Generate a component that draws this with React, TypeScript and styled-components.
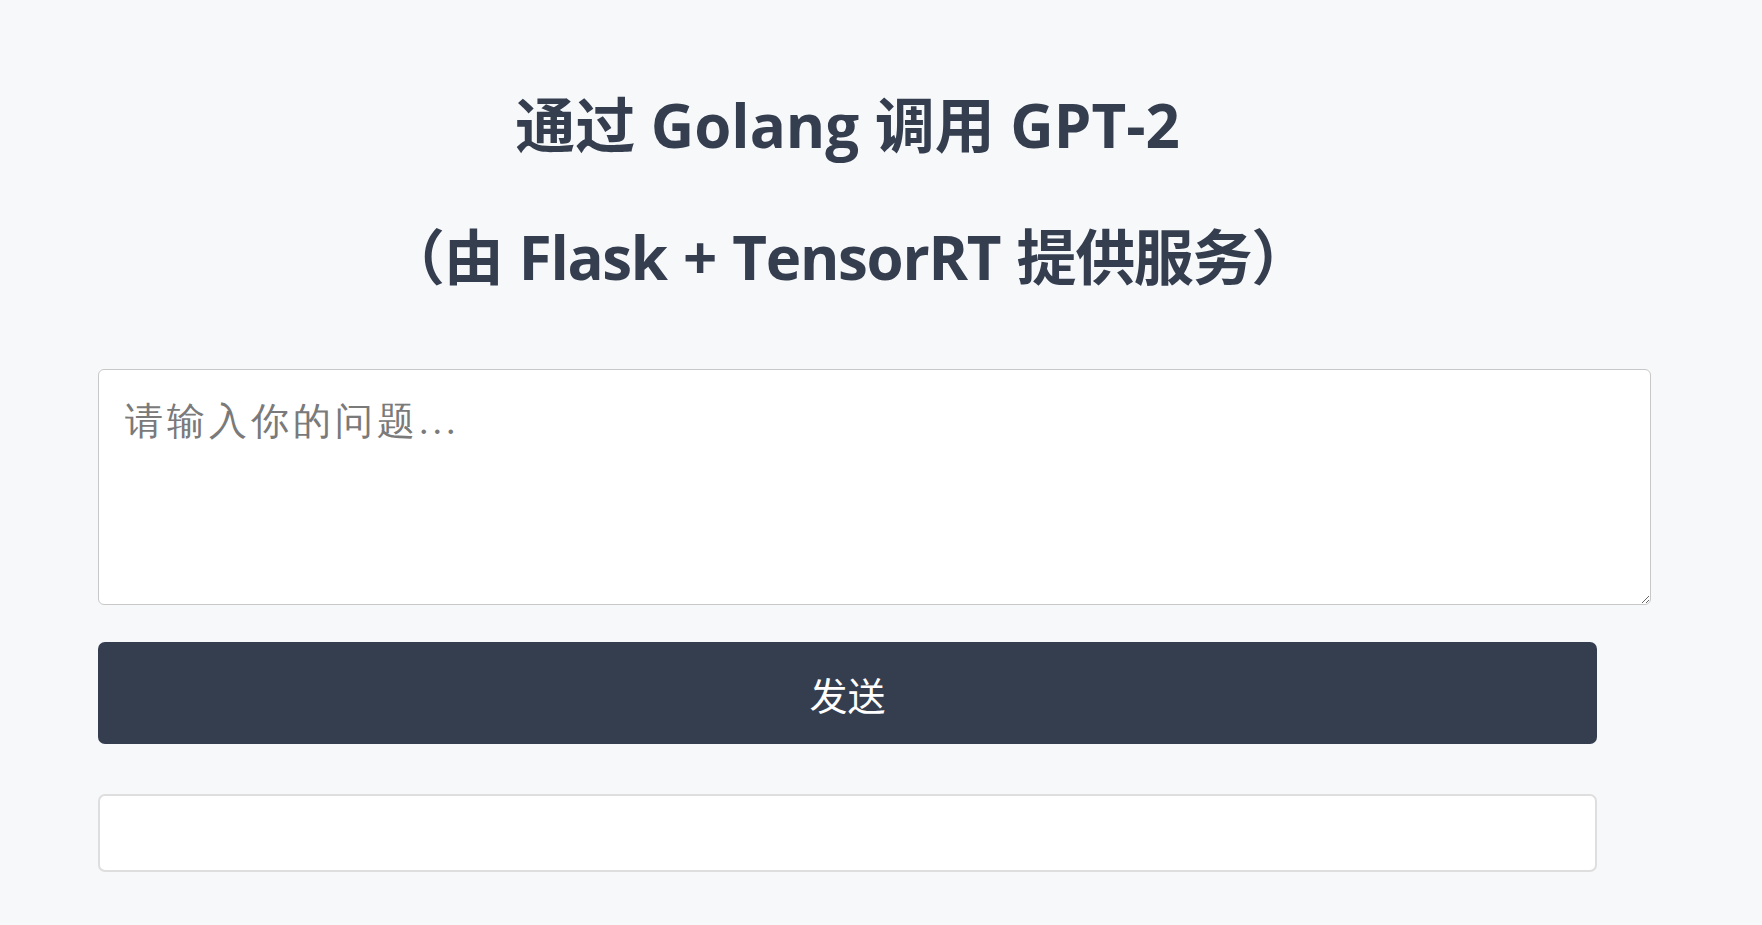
import React from "react";
import styled, { createGlobalStyle } from "styled-components";

const GlobalStyle = createGlobalStyle`
  html, body {
    margin: 0;
    padding: 0;
    background: #f7f8fa;
  }
  body {
    font-family: "Open Sans", "Noto Sans CJK SC", sans-serif;
    color: #343e4f;
  }
`;

const Page = styled.main`
  width: 1499px;
  margin-left: 98px;
  padding-top: 85px;
  display: flex;
  flex-direction: column;
`;

const Title = styled.h1<{ $gap?: number; $tight?: boolean }>`
  margin: 0 0 ${(p) => p.$gap ?? 0}px 0;
  font-family: "Open Sans", "Noto Sans CJK SC", sans-serif;
  font-weight: 700;
  font-size: 60px;
  line-height: 80px;
  letter-spacing: ${(p) => (p.$tight ? "-1.3px" : "0")};
  word-spacing: ${(p) => (p.$tight ? "2px" : "0")};
  text-align: center;
  color: #343e4f;
`;

const Question = styled.textarea`
  display: block;
  width: 100%;
  height: 182px;
  padding: 26px;
  margin: 0;
  border: 1px solid #c8c8c8;
  border-radius: 6px;
  background: #fff;
  font-family: "Liberation Serif", serif;
  font-size: 38px;
  letter-spacing: 4px;
  color: #343e4f;
  outline: none;
  &::placeholder {
    color: #7a7a7a;
  }
`;

const SendButton = styled.button`
  display: flex;
  align-items: center;
  justify-content: center;
  width: 100%;
  height: 102px;
  margin-top: 37px;
  padding: 0;
  border: none;
  border-radius: 7px;
  background: #343e4f;
  color: #fff;
  font-family: "Noto Sans CJK SC", sans-serif;
  font-size: 38px;
  cursor: pointer;
`;

const Output = styled.div`
  box-sizing: border-box;
  width: 100%;
  height: 78px;
  margin-top: 50px;
  border: 2px solid #dedede;
  border-radius: 7px;
  background: #fff;
`;

export default function App() {
  return (
    <>
      <GlobalStyle />
      <Page>
        <Title $gap={52}>通过 Golang 调用 GPT-2</Title>
        <Title $gap={72} $tight>
          （由 Flask + TensorRT 提供服务）
        </Title>
        <Question placeholder="请输入你的问题..." />
        <SendButton>发送</SendButton>
        <Output />
      </Page>
    </>
  );
}
